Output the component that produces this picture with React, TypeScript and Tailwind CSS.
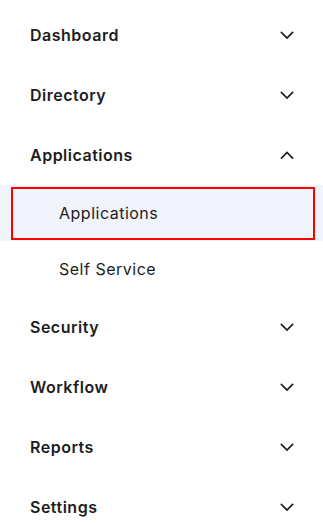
import React from "react";

const Chevron = ({ up }: { up?: boolean }) => (
  <svg width="14" height="14" viewBox="0 0 14 14" fill="none" className="shrink-0">
    <path
      d={up ? "M1.5 10 L7 4.5 L12.5 10" : "M1.5 4.5 L7 10 L12.5 4.5"}
      stroke="#1d1d21"
      strokeWidth="1.7"
      strokeLinecap="square"
    />
  </svg>
);

const Section = ({ label, open }: { label: string; open?: boolean }) => (
  <div className="flex items-center justify-between h-[60px] pl-[30px] pr-[29px]">
    <span className="text-[16px] font-semibold tracking-[0.5px] text-[#1d1d21]">{label}</span>
    <Chevron up={open} />
  </div>
);

export default function App() {
  return (
    <div
      className="w-[323px] h-[524px] bg-white pt-[5px] overflow-hidden"
      style={{ fontFamily: "Inter, 'Noto Sans', sans-serif" }}
    >
      <Section label="Dashboard" />
      <Section label="Directory" />
      <Section label="Applications" open />
      <div className="h-[56px] bg-[#f1f4fd] flex items-center">
        <div className="ml-[11px] w-[304px] h-[53px] border-2 border-[#ff0000] flex items-center pl-[46px]">
          <span className="text-[16px] tracking-[0.5px] text-[#1d1d21]">Applications</span>
        </div>
      </div>
      <div className="h-[56px] flex items-center pl-[59px]">
        <span className="text-[16px] tracking-[0.5px] text-[#1d1d21]">Self Service</span>
      </div>
      <Section label="Security" />
      <Section label="Workflow" />
      <Section label="Reports" />
      <Section label="Settings" />
    </div>
  );
}
